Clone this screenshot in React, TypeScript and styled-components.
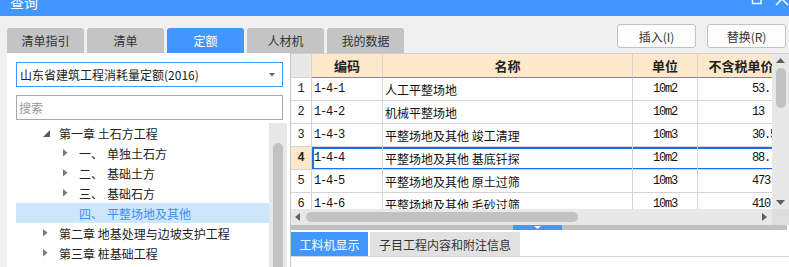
import styled, { createGlobalStyle } from 'styled-components';

const BLUE = '#4197fd';
const PEACH = '#fde8cb';
const LINE = '#d4d4d4';

const GlobalStyle = createGlobalStyle`
  html, body {
    margin: 0;
    padding: 0;
    background: #f0f0f0;
  }
  body {
    font-family: "Noto Sans CJK SC", "Noto Sans", sans-serif;
    color: #333;
  }
  * {
    box-sizing: border-box;
  }
`;

const Window = styled.div`
  width: 789px;
  height: 267px;
  overflow: hidden;
  display: flex;
  flex-direction: column;
  background: #f0f0f0;
`;

const TitleBar = styled.div`
  height: 16px;
  flex: none;
  background: ${BLUE};
  display: flex;
  justify-content: space-between;
  overflow: hidden;
`;

const Title = styled.div`
  margin: -5px 0 0 10px;
  font-size: 14px;
  line-height: 14px;
  color: #fff;
`;

const TopBar = styled.div`
  height: 37px;
  flex: none;
  display: flex;
  justify-content: space-between;
  padding-left: 7px;
`;

const TabStrip = styled.div`
  display: flex;
  gap: 3px;
  align-self: flex-end;
`;

const TopTab = styled.div<{ $active?: boolean }>`
  width: 77px;
  height: 25px;
  border-radius: 3px 3px 0 0;
  background: ${(p) => (p.$active ? BLUE : '#c4c4c4')};
  color: ${(p) => (p.$active ? '#fff' : '#333')};
  font-size: 12px;
  display: flex;
  align-items: center;
  justify-content: center;
`;

const ActionGroup = styled.div`
  display: flex;
  gap: 11px;
  margin: 8px 3px 0 0;
  align-self: flex-start;
`;

const ActionButton = styled.button`
  width: 79px;
  height: 24px;
  padding: 0;
  border: 1px solid #c3c3c3;
  border-radius: 3px;
  background: #fdfdfd;
  color: #333;
  font: 12px "Noto Sans CJK SC", sans-serif;
`;

const Main = styled.div`
  flex: 1;
  display: flex;
  min-height: 0;
`;

const LeftPanel = styled.div`
  margin-left: 7px;
  width: 283px;
  flex: none;
  background: #fff;
  padding: 9px 0 0 9px;
  display: flex;
  flex-direction: column;
`;

const Select = styled.div`
  width: 267px;
  height: 25px;
  flex: none;
  border: 1px solid ${BLUE};
  display: flex;
  align-items: center;
  justify-content: space-between;
  padding: 0 7px 0 3px;
  font-size: 12px;
  color: #222;
`;

const Search = styled.input`
  width: 267px;
  height: 25px;
  flex: none;
  margin-top: 8px;
  border: 1px solid #a8a8a8;
  padding: 0 2px;
  font: 12px "Noto Sans CJK SC", sans-serif;
  outline: none;
  &::placeholder {
    color: #9a9a9a;
  }
`;

const TreeWrap = styled.div`
  flex: 1;
  min-height: 0;
  margin-top: 3px;
  display: flex;
`;

const Tree = styled.div`
  width: 253px;
  flex: none;
`;

const TreeRow = styled.div<{ $level: number; $selected?: boolean }>`
  height: 20px;
  display: flex;
  align-items: center;
  padding-left: ${(p) => 27 + p.$level * 20}px;
  font-size: 12px;
  white-space: nowrap;
  color: ${(p) => (p.$selected ? '#3c8ef0' : '#222')};
  background: ${(p) => (p.$selected ? '#cde6fb' : 'transparent')};
`;

const Toggle = styled.span`
  width: 16px;
  flex: none;
  display: flex;
  align-items: center;
`;

const Ordinal = styled.span`
  width: 28px;
  flex: none;
`;

const ScrollTrack = styled.div<{ $width: number }>`
  width: ${(p) => p.$width}px;
  flex: none;
  background: #e8e8e8;
  display: flex;
  flex-direction: column;
  align-items: center;
  padding-top: 4px;
  overflow: hidden;
`;

const Thumb = styled.div<{ $gap: number; $height: number }>`
  width: 10px;
  height: ${(p) => p.$height}px;
  flex: none;
  margin-top: ${(p) => p.$gap}px;
  border-radius: 5px;
  background: #c2c2c2;
`;

const DownArrowSlot = styled.div`
  margin-top: auto;
  margin-bottom: 4px;
  display: flex;
`;

const RightPanel = styled.div`
  flex: 1;
  min-width: 0;
  border-left: 1px solid #c8c8c8;
  display: flex;
  flex-direction: column;
  background: #fff;
`;

const GridArea = styled.div`
  height: 156px;
  flex: none;
  border-top: 1px solid #cfcfcf;
  display: flex;
`;

const TableClip = styled.div`
  flex: 1;
  min-width: 0;
  overflow: hidden;
`;

const GridRow = styled.div<{ $header?: boolean }>`
  display: grid;
  grid-template-columns: 21px 71px 250px 65px 87px;
  width: 494px;
  height: ${(p) => (p.$header ? 24 : 23)}px;
`;

const HeadCell = styled.div<{ $corner?: boolean }>`
  display: flex;
  align-items: center;
  justify-content: center;
  white-space: nowrap;
  overflow: hidden;
  font-size: 13px;
  font-weight: 700;
  color: #222;
  background: ${(p) => (p.$corner ? '#e8e8e8' : PEACH)};
  border-right: 1px solid ${LINE};
  border-bottom: 1px solid ${(p) => (p.$corner ? LINE : BLUE)};
`;

const RowHead = styled.div<{ $current?: boolean }>`
  display: flex;
  align-items: center;
  justify-content: center;
  font-family: "Liberation Mono", monospace;
  font-size: 12px;
  font-weight: ${(p) => (p.$current ? 700 : 400)};
  color: #222;
  background: ${(p) => (p.$current ? PEACH : '#fff')};
  border-right: 1px solid ${LINE};
  border-bottom: 1px solid ${LINE};
`;

const DataCells = styled.div<{ $selected?: boolean }>`
  grid-column: 2 / 6;
  display: grid;
  grid-template-columns: 71px 250px 65px 87px;
  box-shadow: ${(p) => (p.$selected ? 'inset 2px 2px 0 #1c6fe8, inset 0 -2px 0 #1c6fe8' : 'none')};
`;

const Cell = styled.div<{ $mono?: boolean; $align?: 'left' | 'center'; $pad?: number }>`
  display: flex;
  align-items: center;
  justify-content: ${(p) => (p.$align === 'center' ? 'center' : 'flex-start')};
  padding-left: ${(p) => p.$pad ?? 2}px;
  white-space: nowrap;
  overflow: hidden;
  color: #111;
  font-family: ${(p) => (p.$mono ? '"Liberation Mono", monospace' : '"Noto Sans CJK SC", sans-serif')};
  font-size: 12px;
  letter-spacing: ${(p) => (p.$mono ? '-1.2px' : '0')};
  border-right: 1px solid ${LINE};
  border-bottom: 1px solid ${LINE};
`;

const HScrollRow = styled.div`
  height: 16px;
  flex: none;
  display: flex;
`;

const HTrack = styled.div`
  flex: 1;
  background: #e8e8e8;
  display: flex;
  align-items: center;
  padding: 0 5px 0 4px;
`;

const HThumb = styled.div`
  width: 272px;
  height: 10px;
  margin-left: 6px;
  border-radius: 5px;
  background: #c2c2c2;
`;

const HRight = styled.div`
  margin-left: auto;
  display: flex;
`;

const ScrollCorner = styled.div`
  width: 17px;
  background: #dedede;
`;

const Splitter = styled.div`
  height: 5px;
  flex: none;
  margin-right: 2px;
  background: #c0c0c0;
  display: flex;
  justify-content: center;
`;

const Grip = styled.div`
  width: 49px;
  margin-right: 4px;
  background: ${BLUE};
  display: flex;
  justify-content: center;
  padding-top: 1px;
`;

const BottomPanel = styled.div`
  flex: 1;
  display: flex;
  flex-direction: column;
`;

const BottomTabs = styled.div`
  display: flex;
  gap: 2px;
  padding-top: 2px;
  border-bottom: 1px solid #d8d8d8;
`;

const BottomTab = styled.div<{ $active?: boolean; $width: number }>`
  width: ${(p) => p.$width}px;
  height: 24px;
  display: flex;
  align-items: center;
  justify-content: center;
  font-size: 12px;
  background: ${(p) => (p.$active ? BLUE : '#e1e1e1')};
  color: ${(p) => (p.$active ? '#fff' : '#333')};
`;

const tabs = ['清单指引', '清单', '定额', '人材机', '我的数据'];

const tree = [
  { level: 0, toggle: 'open', label: '第一章 土石方工程' },
  { level: 1, toggle: 'closed', num: '一、', label: '单独土石方' },
  { level: 1, toggle: 'closed', num: '二、', label: '基础土方' },
  { level: 1, toggle: 'closed', num: '三、', label: '基础石方' },
  { level: 1, num: '四、', label: '平整场地及其他', selected: true },
  { level: 0, toggle: 'closed', label: '第二章 地基处理与边坡支护工程' },
  { level: 0, toggle: 'closed', label: '第三章 桩基础工程' },
];

const rows = [
  { code: '1-4-1', name: '人工平整场地', unit: '10m2', price: '53.' },
  { code: '1-4-2', name: '机械平整场地', unit: '10m2', price: '13' },
  { code: '1-4-3', name: '平整场地及其他 竣工清理', unit: '10m3', price: '30.5' },
  { code: '1-4-4', name: '平整场地及其他 基底钎探', unit: '10m2', price: '88.' },
  { code: '1-4-5', name: '平整场地及其他 原土过筛', unit: '10m3', price: '473' },
  { code: '1-4-6', name: '平整场地及其他 毛砂过筛', unit: '10m3', price: '410.8' },
];

const ArrowUp = () => (
  <svg width="9" height="5" viewBox="0 0 9 5">
    <polygon points="0,5 4.5,0 9,5" fill="#5f5f5f" />
  </svg>
);

const ArrowDown = () => (
  <svg width="9" height="5" viewBox="0 0 9 5">
    <polygon points="0,0 9,0 4.5,5" fill="#5f5f5f" />
  </svg>
);

const ArrowLeft = () => (
  <svg width="5" height="8" viewBox="0 0 5 8">
    <polygon points="5,0 5,8 0,4" fill="#5f5f5f" />
  </svg>
);

const ArrowRight = () => (
  <svg width="5" height="8" viewBox="0 0 5 8">
    <polygon points="0,0 5,4 0,8" fill="#5f5f5f" />
  </svg>
);

function TreeToggle({ kind }: { kind?: string }) {
  if (kind === 'open') {
    return (
      <svg width="8" height="8" viewBox="0 0 8 8" style={{ marginTop: 2 }}>
        <polygon points="7,0 7,7 0,7" fill="#5c5c5c" />
      </svg>
    );
  }
  if (kind === 'closed') {
    return (
      <svg width="5" height="8" viewBox="0 0 5 8">
        <polygon points="0,0 4.5,3.75 0,7.5" fill="#7a7a7a" />
      </svg>
    );
  }
  return null;
}

export default function App() {
  return (
    <Window>
      <GlobalStyle />
      <TitleBar>
        <Title>查询</Title>
        <svg width="39" height="16">
          <rect x="2.5" y="-6" width="8.5" height="9.5" fill="none" stroke="#fff" strokeWidth="1.4" />
          <line x1="26" y1="-7" x2="38" y2="5" stroke="#fff" strokeWidth="1.4" />
          <line x1="38" y1="-7" x2="26" y2="5" stroke="#fff" strokeWidth="1.4" />
        </svg>
      </TitleBar>

      <TopBar>
        <TabStrip>
          {tabs.map((t) => (
            <TopTab key={t} $active={t === '定额'}>
              {t}
            </TopTab>
          ))}
        </TabStrip>
        <ActionGroup>
          <ActionButton>插入(I)</ActionButton>
          <ActionButton>替换(R)</ActionButton>
        </ActionGroup>
      </TopBar>

      <Main>
        <LeftPanel>
          <Select>
            <span>山东省建筑工程消耗量定额(2016)</span>
            <svg width="6" height="4" viewBox="0 0 6 4">
              <polygon points="0,0 6,0 3,3.5" fill="#6a6a6a" />
            </svg>
          </Select>
          <Search placeholder="搜索" />
          <TreeWrap>
            <Tree>
              {tree.map((n) => (
                <TreeRow key={n.label} $level={n.level} $selected={n.selected}>
                  <Toggle>
                    <TreeToggle kind={n.toggle} />
                  </Toggle>
                  {n.num && <Ordinal>{n.num}</Ordinal>}
                  <span>{n.label}</span>
                </TreeRow>
              ))}
            </Tree>
            <ScrollTrack $width={18}>
              <ArrowUp />
              <Thumb $gap={16} $height={200} />
            </ScrollTrack>
          </TreeWrap>
        </LeftPanel>

        <RightPanel>
          <GridArea>
            <TableClip>
              <GridRow $header>
                <HeadCell $corner />
                <HeadCell>编码</HeadCell>
                <HeadCell>名称</HeadCell>
                <HeadCell>单位</HeadCell>
                <HeadCell>不含税单价</HeadCell>
              </GridRow>
              {rows.map((r, i) => (
                <GridRow key={r.code}>
                  <RowHead $current={i === 3}>{i + 1}</RowHead>
                  <DataCells $selected={i === 3}>
                    <Cell $mono>{r.code}</Cell>
                    <Cell>{r.name}</Cell>
                    <Cell $mono $align="center" $pad={0}>
                      {r.unit}
                    </Cell>
                    <Cell $mono $pad={54}>
                      {r.price}
                    </Cell>
                  </DataCells>
                </GridRow>
              ))}
            </TableClip>
            <ScrollTrack $width={17}>
              <ArrowUp />
              <Thumb $gap={5} $height={40} />
              <DownArrowSlot>
                <ArrowDown />
              </DownArrowSlot>
            </ScrollTrack>
          </GridArea>

          <HScrollRow>
            <HTrack>
              <ArrowLeft />
              <HThumb />
              <HRight>
                <ArrowRight />
              </HRight>
            </HTrack>
            <ScrollCorner />
          </HScrollRow>

          <Splitter>
            <Grip>
              <svg width="7" height="3" viewBox="0 0 7 3">
                <polygon points="0,0 7,0 3.5,3" fill="#fff" />
              </svg>
            </Grip>
          </Splitter>

          <BottomPanel>
            <BottomTabs>
              <BottomTab $active $width={77}>
                工料机显示
              </BottomTab>
              <BottomTab $width={150}>子目工程内容和附注信息</BottomTab>
            </BottomTabs>
          </BottomPanel>
        </RightPanel>
      </Main>
    </Window>
  );
}
